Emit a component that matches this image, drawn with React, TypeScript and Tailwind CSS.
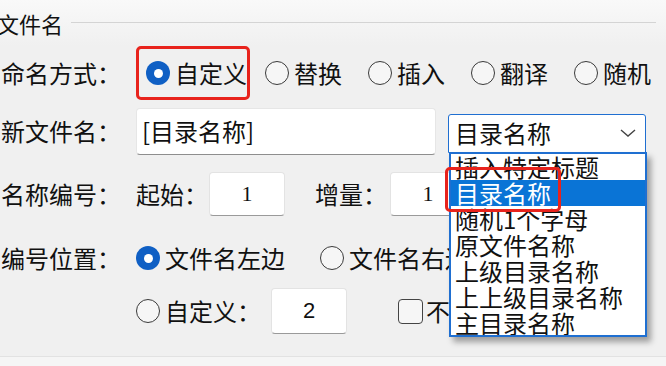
import React from "react";

const font = { fontFamily: '"Noto Sans CJK SC", "Noto Sans", sans-serif' };

function Radio({ checked }: { checked?: boolean }) {
  return checked ? (
    <span className="flex h-[24px] w-[24px] shrink-0 items-center justify-center rounded-full bg-[#0f5fc4]">
      <span className="h-[9px] w-[9px] rounded-full bg-white" />
    </span>
  ) : (
    <span className="h-[24px] w-[24px] shrink-0 rounded-full border-[1.5px] border-[#3a3a3a] bg-[#f6f6f6]" />
  );
}

function RadioItem({ checked, label }: { checked?: boolean; label: string }) {
  return (
    <div className="flex items-center gap-[5px]">
      <Radio checked={checked} />
      <span className="whitespace-nowrap text-[24px] leading-none text-[#111]">{label}</span>
    </div>
  );
}

function Label({ children }: { children: React.ReactNode }) {
  return (
    <div className="w-[136px] shrink-0 whitespace-nowrap pl-[1px] text-[24px] leading-none text-[#111]">
      {children}
    </div>
  );
}

function NumBox({ value, serif }: { value: string; serif?: boolean }) {
  return (
    <div
      className="flex h-[44px] w-[76px] shrink-0 items-center justify-center rounded-[4px] border border-[#e3e3e3] border-b-[#9a9a9a] bg-white text-[22px] leading-none text-[#111]"
      style={serif ? { fontFamily: '"Liberation Serif", serif' } : { fontFamily: '"Liberation Sans", sans-serif' }}
    >
      {value}
    </div>
  );
}

const items = ["插入特定标题", "目录名称", "随机1个字母", "原文件名称", "上级目录名称", "上上级目录名称", "主目录名称"];

export default function App() {
  return (
    <div className="relative h-[366px] w-[666px] overflow-hidden bg-[#f0f0f0]" style={font}>
      {/* group header */}
      <div className="flex h-[46px] items-center bg-gradient-to-b from-[#f9f9f9] to-[#f0f0f0]">
        <span className="ml-[-3px] whitespace-nowrap text-[22px] leading-none text-[#111]">文件名</span>
        <div className="ml-[8px] mr-[10px] h-px flex-1 bg-[#d4d4d4] translate-y-[-1px]" />
      </div>

      {/* row 1 */}
      <div className="flex h-[54px] items-center">
        <Label>命名方式：</Label>
        <div className="flex h-[54px] w-[114px] items-center rounded-[5px] border-[3px] border-[#e8231c] pl-[7px]">
          <RadioItem checked label="自定义" />
        </div>
        <div className="ml-[15px] flex items-center gap-[26px]">
          <RadioItem label="替换" />
          <RadioItem label="插入" />
          <RadioItem label="翻译" />
          <RadioItem label="随机" />
        </div>
      </div>

      {/* row 2 */}
      <div className="flex h-[62px] items-center">
        <Label>新文件名：</Label>
        <div className="flex h-[47px] w-[300px] items-center rounded-[4px] border border-[#e6e6e6] border-b-[#8e8e8e] bg-white pl-[5px] text-[24px] leading-none text-[#111]">
          [目录名称]
        </div>
        <div className="ml-[12px] mt-[4px] flex h-[39px] w-[198px] items-center justify-between rounded-t-[3px] border border-[#1f6fd1] bg-white pl-[6px] pr-[8px] text-[24px] leading-none text-[#111]">
          <span>目录名称</span>
          <svg width="18" height="10" viewBox="0 0 18 10" fill="none">
            <path d="M2 2 L9 8 L16 2" stroke="#444" strokeWidth="1.4" />
          </svg>
        </div>
      </div>

      {/* row 3 */}
      <div className="flex h-[64px] items-center">
        <Label>名称编号：</Label>
        <span className="w-[73px] whitespace-nowrap text-[24px] leading-none text-[#111]">起始：</span>
        <NumBox value="1" serif />
        <span className="ml-[30px] w-[75px] whitespace-nowrap text-[24px] leading-none text-[#111]">增量：</span>
        <NumBox value="1" serif />
      </div>

      {/* row 4 */}
      <div className="flex h-[64px] items-center">
        <Label>编号位置：</Label>
        <RadioItem checked label="文件名左边" />
        <div className="ml-[35px]">
          <RadioItem label="文件名右边" />
        </div>
      </div>

      {/* row 5 */}
      <div className="flex h-[42px] items-center">
        <div className="w-[136px] shrink-0" />
        <RadioItem label="自定义：" />
        <div className="ml-[10px]">
          <div className="flex h-[46px] w-[76px] items-center justify-center rounded-[4px] border border-[#e3e3e3] border-b-[#9a9a9a] bg-white text-[22px] leading-none text-[#111]" style={{ fontFamily: '"Liberation Sans", sans-serif' }}>
            2
          </div>
        </div>
        <div className="ml-[51px] flex items-center gap-[3px]">
          <span className="h-[25px] w-[25px] rounded-[4px] border-[1.5px] border-[#444] bg-[#f6f6f6]" />
          <span className="whitespace-nowrap text-[24px] leading-none text-[#111]">不足补零</span>
        </div>
      </div>

      {/* bottom strip */}
      <div className="absolute bottom-0 left-0 h-[10px] w-full border-t border-[#e2e2e2] bg-[#f5f5f5]" />

      {/* dropdown list popup */}
      <div className="absolute left-[449px] top-[152px] h-[185px] w-[198px] overflow-hidden border-2 border-[#1f6fd1] bg-white shadow-[4px_5px_6px_rgba(0,0,0,0.35)]">
        {items.map((t, i) => (
          <div
            key={t}
            className={
              "h-[26px] whitespace-nowrap pl-[4px] text-[24px] leading-[25px] " +
              (i === 1 ? "bg-[#0a74d6] text-white" : "text-[#111]")
            }
          >
            {t}
          </div>
        ))}
      </div>
      {/* red annotation box */}
      <div className="absolute left-[445px] top-[167px] h-[45px] w-[116px] rounded-[5px] border-[3px] border-[#e8231c]" />
    </div>
  );
}
